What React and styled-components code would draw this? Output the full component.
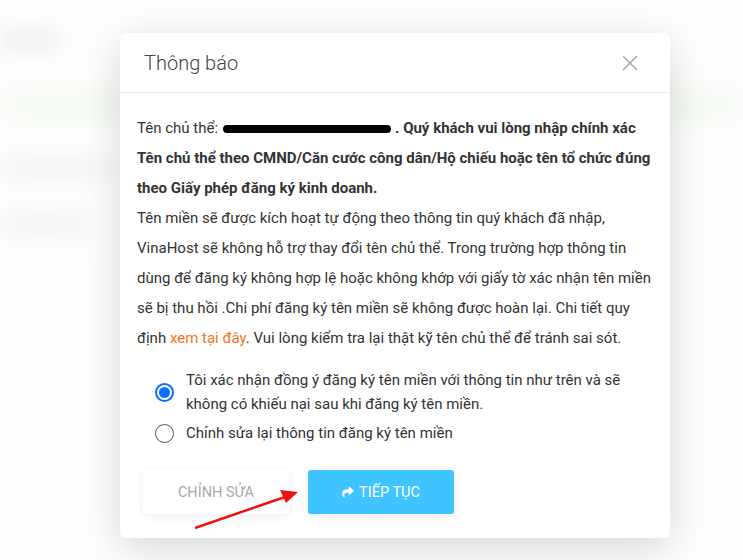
import styled, {createGlobalStyle} from 'styled-components'
import {FaShare} from 'react-icons/fa'

// Global
const GlobalStyle = createGlobalStyle`
    html, body {
        margin:0;
        padding:0;
        background:#fdfdfd;
        font-family:Roboto, "Noto Sans", sans-serif;
    }
    * { box-sizing:border-box; }
`

// Blurred page behind the dialog
const Page = styled.div`
    position:relative;
    width:743px;
    height:560px;
    overflow:hidden;
    background:#fefefe;
`
const Backdrop = styled.div`
    display:flex;
    flex-direction:column;
    gap:40px;
    padding:30px 0 0 0;
    filter:blur(12px);
    opacity:0.55;
`
const BlurRow = styled.div`
    height:${({h}) => h}px;
    width:${({w}) => w}px;
    margin-left:${({ml}) => ml || 0}px;
    background:${({c}) => c};
    border-radius:8px;
`
const Overlay = styled.div`
    position:absolute;
    inset:0;
    display:flex;
    justify-content:flex-start;
    padding:33px 0 0 120px;
`

// Modal
const Modal = styled.div`
    width:550px;
    height:505px;
    background:#fff;
    border-radius:6px;
    box-shadow:0 10px 40px rgba(0,0,0,0.16);
    display:flex;
    flex-direction:column;
`
const Header = styled.div`
    height:60px;
    display:flex;
    align-items:center;
    justify-content:space-between;
    padding:0 32px 0 24px;
    border-bottom:1px solid #e9e9e9;
`
const Title = styled.h3`
    margin:0;
    font-size:20px;
    font-weight:300;
    color:#444;
`
const Close = styled.button`
    border:0;
    background:none;
    padding:0;
    cursor:pointer;
    display:flex;
`
const Body = styled.div`
    padding:20px 17px 24px 17px;
    font-size:15px;
    line-height:30px;
    color:#333;
`
const Para = styled.p`
    margin:0;
`
const Strong = styled.b`
    font-weight:700;
`
const Redact = styled.span`
    display:inline-block;
    width:168px;
    height:8px;
    border-radius:4px;
    background:#000;
    margin:0 4px 0 5px;
    vertical-align:middle;
`
const Link = styled.a`
    color:#f47321;
    text-decoration:none;
`
const Options = styled.div`
    display:flex;
    flex-direction:column;
    gap:5px;
    margin:15px 0 0 18px;
`
const Option = styled.label`
    display:flex;
    align-items:center;
    gap:12px;
    line-height:24px;
    color:#333;
`
const Radio = styled.span`
    flex:none;
    width:19px;
    height:19px;
    border-radius:50%;
    border:${({checked}) => checked ? '2px solid #0d6efd' : '1px solid #555'};
    display:flex;
    align-items:center;
    justify-content:center;
    &::after{
        content:'';
        width:11px;
        height:11px;
        border-radius:50%;
        background:${({checked}) => checked ? '#0d6efd' : 'transparent'};
    }
`
const Buttons = styled.div`
    display:flex;
    gap:19px;
    margin:25px 0 0 6px;
`
const Button = styled.button`
    width:146px;
    height:44px;
    border:0;
    border-radius:3px;
    font-family:Roboto, sans-serif;
    font-size:14.5px;
    text-transform:uppercase;
    display:flex;
    align-items:center;
    justify-content:center;
    gap:5px;
    cursor:pointer;
    background:${({primary}) => primary ? '#40c4ff' : '#fff'};
    color:${({primary}) => primary ? '#fff' : '#a8a8a8'};
    box-shadow:0 2px 10px rgba(0,0,0,${({primary}) => primary ? 0.08 : 0.07});
`
const Arrow = styled.svg`
    position:absolute;
    left:190px;
    top:486px;
`

// Main
const App = () => {
    return (
        <Page>
            <GlobalStyle />
            <Backdrop>
                <BlurRow h={20} w={60} c='#ddd' />
                <BlurRow h={30} w={743} c='#eef7ea' />
                <BlurRow h={16} w={110} c='#e2e2e2' />
                <BlurRow h={16} w={90} c='#e2e2e2' />
            </Backdrop>
            <Overlay>
                <Modal>
                    <Header>
                        <Title>Thông báo</Title>
                        <Close aria-label='close'>
                            <svg width='16' height='16' viewBox='0 0 16 16'>
                                <path d='M1 1L15 15M15 1L1 15' stroke='#a9a9a9' strokeWidth='1.6' />
                            </svg>
                        </Close>
                    </Header>
                    <Body>
                        <Para>
                            Tên chủ thể:<Redact />
                            <Strong>. Quý khách vui lòng nhập chính xác Tên chủ thể theo CMND/Căn cước công dân/Hộ chiếu hoặc tên tổ chức đúng theo Giấy phép đăng ký kinh doanh.</Strong>
                        </Para>
                        <Para>
                            Tên miền sẽ được kích hoạt tự động theo thông tin quý khách đã nhập, VinaHost sẽ không hỗ trợ thay đổi tên chủ thể. Trong trường hợp thông tin dùng để đăng ký không hợp lệ hoặc không khớp với giấy tờ xác nhận tên miền sẽ bị thu hồi .Chi phí đăng ký tên miền sẽ không được hoàn lại. Chi tiết quy định <Link href='#'>xem tại đây</Link>. Vui lòng kiểm tra lại thật kỹ tên chủ thể để tránh sai sót.
                        </Para>
                        <Options>
                            <Option>
                                <Radio checked />
                                <span>Tôi xác nhận đồng ý đăng ký tên miền với thông tin như trên và sẽ không có khiếu nại sau khi đăng ký tên miền.</span>
                            </Option>
                            <Option>
                                <Radio />
                                <span>Chỉnh sửa lại thông tin đăng ký tên miền</span>
                            </Option>
                        </Options>
                        <Buttons>
                            <Button>Chỉnh sửa</Button>
                            <Button primary><FaShare size={12} /> Tiếp tục</Button>
                        </Buttons>
                    </Body>
                </Modal>
            </Overlay>
            <Arrow width='115' height='48' viewBox='0 0 115 48'>
                <line x1='5' y1='42' x2='95' y2='11' stroke='#f01010' strokeWidth='2.5' />
                <polygon points='108,6 90,4 96,17' fill='#f01010' />
            </Arrow>
        </Page>
    )
}

export default App
